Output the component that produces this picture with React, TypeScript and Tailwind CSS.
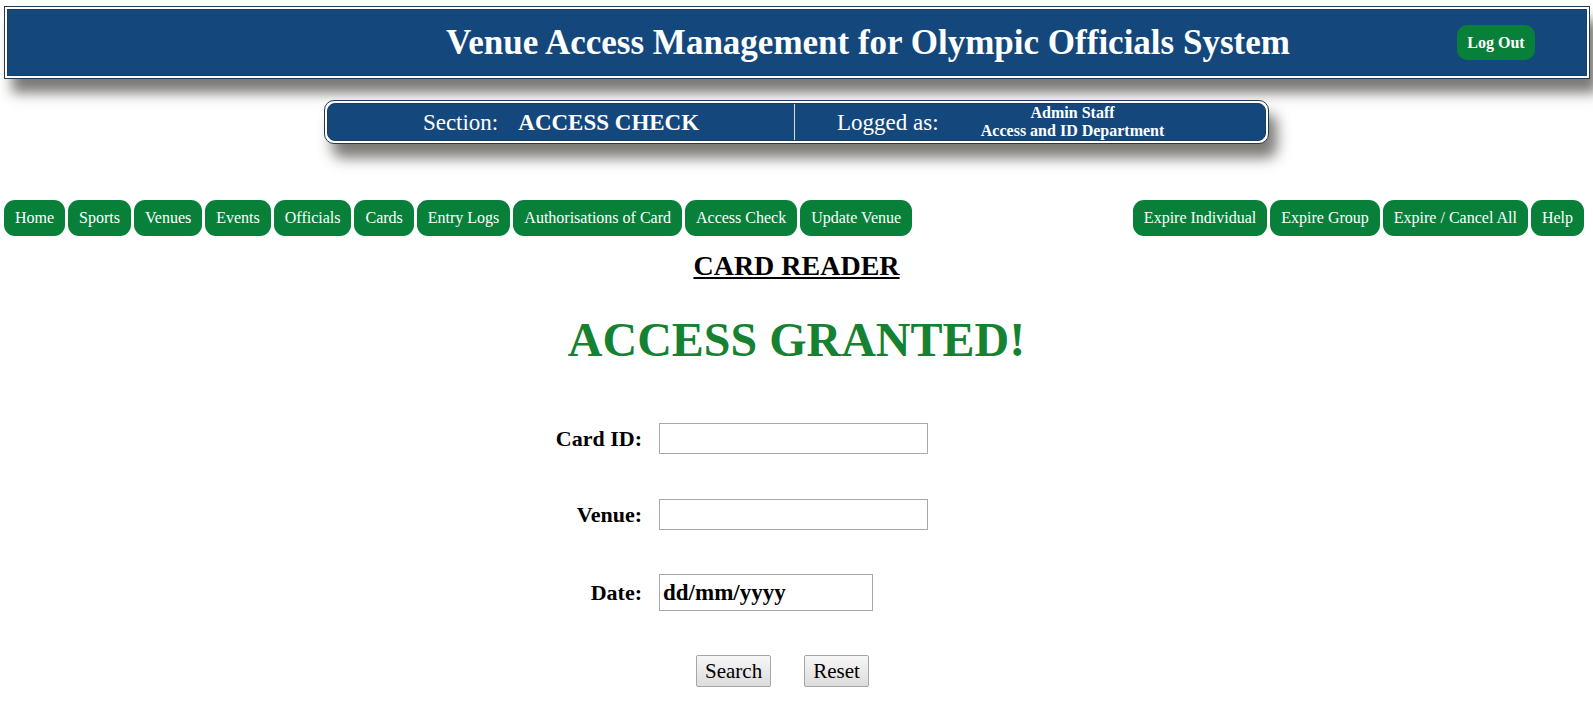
import React from "react";

const leftNav = [
  "Home",
  "Sports",
  "Venues",
  "Events",
  "Officials",
  "Cards",
  "Entry Logs",
  "Authorisations of Card",
  "Access Check",
  "Update Venue",
];
const rightNav = ["Expire Individual", "Expire Group", "Expire / Cancel All", "Help"];

function NavButton({ label }: { label: string }) {
  return (
    <button className="h-[36px] px-[11px] rounded-[11px] bg-[#08803a] text-white text-[16px] leading-[18px] whitespace-nowrap flex items-center">
      {label}
    </button>
  );
}

export default function App() {
  return (
    <div className="min-h-[711px] bg-white text-black font-['Liberation_Serif','Times_New_Roman',serif]">
      {/* Header */}
      <div className="pt-[6px] pl-[4px]">
        <div className="w-[1586px] h-[73px] border border-[#1d3c5a] p-[2px] bg-white shadow-[8px_14px_12px_rgba(70,65,60,0.7)]">
          <div className="h-full border border-[#1d3c5a] bg-[#14487c] flex items-center">
            <div className="flex-1 pl-[271px] text-center text-white font-bold text-[35px] leading-none whitespace-nowrap">
              Venue Access Management for Olympic Officials System
            </div>
            <button className="mr-[51px] w-[78px] h-[35px] rounded-[10px] bg-[#08803a] text-white font-bold text-[16px] flex items-center justify-center">
              Log Out
            </button>
          </div>
        </div>
      </div>

      {/* Section bar */}
      <div className="mt-[21px] flex justify-center">
        <div className="w-[945px] h-[44px] border border-[#1d3c5a] rounded-[10px] p-[2px] bg-white shadow-[8px_14px_14px_rgba(70,65,60,0.7)]">
          <div className="h-full border border-[#1d3c5a] rounded-[8px] bg-[#14487c] flex text-white">
            <div className="w-[467px] shrink-0 flex items-center justify-center gap-[20px] border-r border-[#d5dde5]">
              <span className="text-[23px] leading-none">Section:</span>
              <span className="text-[23px] leading-none font-bold">ACCESS CHECK</span>
            </div>
            <div className="flex-1 flex items-center pl-[42px]">
              <span className="text-[23px] leading-none whitespace-nowrap">Logged as:</span>
              <div className="ml-[34px] w-[200px] shrink-0 text-center font-bold text-[16px] leading-[18px] whitespace-nowrap">
                <div>Admin Staff</div>
                <div>Access and ID Department</div>
              </div>
            </div>
          </div>
        </div>
      </div>

      {/* Navigation */}
      <div className="mt-[56px] flex justify-between pl-[4px] pr-[9px]">
        <div className="flex gap-[3px]">
          {leftNav.map((l) => (
            <NavButton key={l} label={l} />
          ))}
        </div>
        <div className="flex gap-[3px]">
          {rightNav.map((l) => (
            <NavButton key={l} label={l} />
          ))}
        </div>
      </div>

      {/* Title */}
      <div className="mt-[16px] text-center text-[28px] leading-none font-bold underline">CARD READER</div>
      <div className="mt-[36px] text-center text-[48px] leading-none font-bold text-[#148230]">ACCESS GRANTED!</div>

      {/* Form */}
      <div className="mt-[58px] ml-[522px] flex flex-col gap-[43px]">
        <div className="flex items-center">
          <label className="w-[120px] text-right font-bold text-[22px]">Card ID:</label>
          <input type="text" className="ml-[17px] w-[269px] h-[31px] border border-[#a9a9a9] bg-white px-[3px] outline-none" />
        </div>
        <div className="flex items-center">
          <label className="w-[120px] text-right font-bold text-[22px]">Venue:</label>
          <input type="text" className="ml-[17px] w-[269px] h-[31px] border border-[#a9a9a9] bg-white px-[3px] outline-none" />
        </div>
        <div className="flex items-center">
          <label className="w-[120px] text-right font-bold text-[22px]">Date:</label>
          <input
            type="text"
            defaultValue="dd/mm/yyyy"
            className="ml-[17px] w-[214px] h-[37px] border border-[#a9a9a9] bg-white pl-[3px] font-bold text-[23px] outline-none"
          />
        </div>
      </div>

      <div className="mt-[44px] ml-[696px] flex gap-[33px]">
        <button className="h-[32px] px-[8px] border border-[#a6a6a6] rounded-[2px] bg-gradient-to-b from-[#f7f7f7] to-[#dcdcdc] text-[21px] leading-none">
          Search
        </button>
        <button className="h-[32px] px-[8px] border border-[#a6a6a6] rounded-[2px] bg-gradient-to-b from-[#f7f7f7] to-[#dcdcdc] text-[21px] leading-none">
          Reset
        </button>
      </div>
    </div>
  );
}
